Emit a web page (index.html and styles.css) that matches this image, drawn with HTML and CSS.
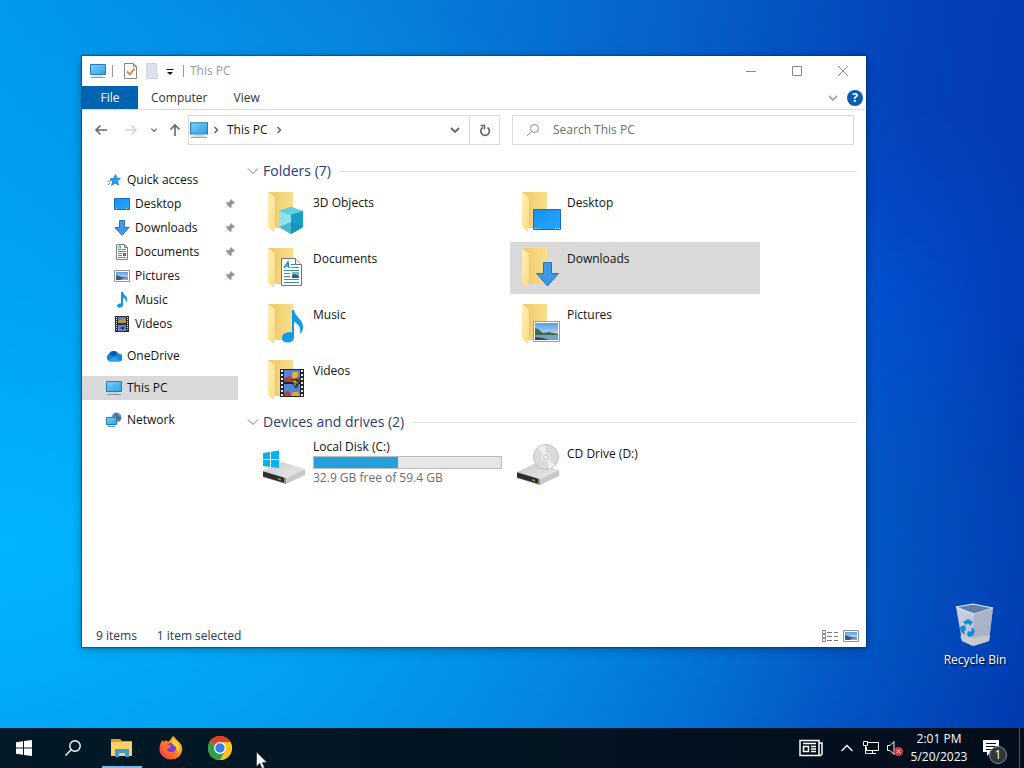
FILE: index.html
```html
<!DOCTYPE html>
<html lang="en">
<head>
    <meta charset="UTF-8">
    <meta name="viewport" content="width=device-width, initial-scale=1.0">
    <title>This PC</title>
    <link rel="stylesheet" href="styles.css">
</head>
<body>
    <!-- Shared icons -->
    <svg class="sprite" aria-hidden="true">
        <defs>
            <linearGradient id="screenFill" x1="0" y1="0" x2="1" y2="1">
                <stop offset="0" stop-color="#7fd0fa"/>
                <stop offset="1" stop-color="#2ba0ea"/>
            </linearGradient>
            <linearGradient id="desktopFill" x1="0" y1="0" x2="1" y2="1">
                <stop offset="0" stop-color="#1590f0"/>
                <stop offset="1" stop-color="#28a8ff"/>
            </linearGradient>
            <linearGradient id="folderBack" x1="0" y1="0" x2="1" y2="0">
                <stop offset="0" stop-color="#eec766"/>
                <stop offset="1" stop-color="#fbdf8c"/>
            </linearGradient>
            <linearGradient id="folderFlap" x1="0" y1="0" x2="1" y2="1">
                <stop offset="0" stop-color="#fff0b8"/>
                <stop offset="1" stop-color="#fbdb84"/>
            </linearGradient>
            <linearGradient id="skyFill" x1="0" y1="0" x2="0" y2="1">
                <stop offset="0" stop-color="#5b9ee0"/>
                <stop offset="1" stop-color="#e4f2fa"/>
            </linearGradient>
            <linearGradient id="driveTop" x1="0" y1="0" x2="1" y2="1">
                <stop offset="0" stop-color="#c9c9c9"/>
                <stop offset="1" stop-color="#ececec"/>
            </linearGradient>
            <linearGradient id="binFill" x1="0" y1="0" x2="1" y2="1">
                <stop offset="0" stop-color="#c6d2e4"/>
                <stop offset="1" stop-color="#b4bccb"/>
            </linearGradient>
            <linearGradient id="foxFill" x1="1" y1="0" x2="0" y2="1">
                <stop offset="0" stop-color="#ffe14a"/>
                <stop offset="0.45" stop-color="#ff8a1e"/>
                <stop offset="1" stop-color="#f2275a"/>
            </linearGradient>
        </defs>

        <symbol id="pc" viewBox="0 0 16 16">
            <path d="M.5 1.5h15v10H.5z" fill="url(#screenFill)" stroke="#2b7cb3"/>
            <path d="M4 13h8" stroke="#bcd4e2"/>
            <path d="M1 14.5h14" stroke="#8198a6"/>
        </symbol>
        <symbol id="star" viewBox="0 0 16 16">
            <path d="M9.500 2.500l1.200 3.600 3.800.2-3 2.600 1 4.100-3.500-2-3.400 2.500.9-4.300-2.500-2.300 3.800-.7z" fill="#2b9bea" stroke="#1d7cc6" stroke-width=".8"/>
            <path d="M2 10l3-2M2 13l2-2" stroke="#3f93cf"/>
        </symbol>
        <symbol id="desktop" viewBox="0 0 16 16">
            <path d="M.5 2.500h15v11H.5z" fill="url(#desktopFill)" stroke="#1173bb"/>
            <path d="M2 12.500h2m8 0h2" stroke="#bfe3fb" stroke-dasharray="1 1"/>
        </symbol>
        <symbol id="download" viewBox="0 0 16 16">
            <path d="M5.500.5h5v7h4.500L8 15.300 1 7.500h4.500z" fill="#3d9aec" stroke="#2a72b8"/>
        </symbol>
        <symbol id="document" viewBox="0 0 16 16">
            <path d="M2.500.5h8l3 3v12h-11z" fill="#fff" stroke="#77858b"/>
            <path d="M10.500.5v3h3" fill="none" stroke="#77858b"/>
            <path d="M4 5.500h3M4 7.500h8M4 9.500h4M4 11.500h4M4 13.500h8" stroke="#3f93a8"/>
            <path d="M4 4.500l2-3 1 3M8 5.500h4" fill="none" stroke="#2ba0a8"/>
            <path d="M9 9h3v3H9z" fill="#3c7b70"/>
        </symbol>
        <symbol id="picture" viewBox="0 0 16 16">
            <path d="M.5 2.500h15v11H.5z" fill="#fff" stroke="#8a949c"/>
            <path d="M2 4h12v8H2z" fill="url(#skyFill)"/>
            <path d="M2 7l3 1 3 1 6 .5V12H2z" fill="#3e5c78"/>
            <path d="M7 11l4-1 3 0v2H7z" fill="#7fa8c8"/>
        </symbol>
        <symbol id="note" viewBox="0 0 16 16">
            <path d="M7 0h2c.2 3 4.500 4 4.200 7.500-.1 1.300-.7 2.300-1.200 3 .2-2.500-.8-4-3-4.700V13c0 1.700-1.600 2.800-3.300 2.800C4 15.800 3 15 3 13.800c0-1.500 1.800-2.600 4-2.300z" fill="#1794e4"/>
        </symbol>
        <symbol id="film" viewBox="0 0 16 16">
            <path d="M1 0h14v16H1z" fill="#2c2c35"/>
            <path d="M4 1h8v6H4z" fill="#5c79cc"/>
            <path d="M4 9h8v6H4z" fill="#6a86d8"/>
            <path d="M4 5l3-1 1-2 2 1 2 2v2H4z" fill="#b99a3a"/>
            <path d="M6 12l3-2 2 2-2 2z" fill="#30405f"/>
            <path d="M2.500 1v14M13.500 1v14" stroke="#e8e8e8" stroke-dasharray="1 1"/>
        </symbol>
        <symbol id="cloud" viewBox="0 0 16 16">
            <path d="M4 13.500a4 4 0 0 1-1-7.500 5 5 0 0 1 9-.5 4 4 0 0 1 1 8z" fill="#1583d6"/>
            <path d="M3 6.200a5 5 0 0 1 9-.8l-4 3z" fill="#0a5caa"/>
            <path d="M1.500 12.500L9 8.500l5.500 4.500-1.500.5H4z" fill="#2ea2ee"/>
        </symbol>
        <symbol id="network" viewBox="0 0 16 16">
            <circle cx="10.500" cy="5.500" r="5" fill="#7296ad"/>
            <path d="M8 2l3-1 1 3 3 1-1 4-3-2z" fill="#3d6f96"/>
            <path d="M.5 5.500h10v7H.5z" fill="url(#screenFill)" stroke="#2079b8"/>
            <path d="M2 14.500h7" stroke="#4b9bcd"/>
        </symbol>
        <symbol id="pin" viewBox="0 0 12 12">
            <path d="M7 1l4 4-1 .8-.8-.2L7.500 7.400v2l-1 .8-2.300-2.300L1 11l3-3.400L1.800 5.300l.8-1h2L6.400 2.700 6.200 1.800z" fill="#8f979d"/>
        </symbol>
        <symbol id="folder" viewBox="0 0 48 48">
            <path d="M8 4h25v36H14z" fill="url(#folderBack)"/>
            <path d="M8 4l8 6v28l-2 1v5l-6-5z" fill="url(#folderFlap)"/>
            <path d="M15.500 10v28" stroke="#e8c66c"/>
        </symbol>
        <symbol id="drive" viewBox="0 0 48 48">
            <path d="M3 33l19-9 23 7-19 9z" fill="url(#driveTop)"/>
            <path d="M3 33l23 7v6L3 39z" fill="#8c8c8c"/>
            <path d="M3 33.500l21 6.300v5L3 38.500z" fill="#2e2e2e"/>
            <path d="M26 40l19-9v6l-19 9z" fill="#c9c9c9"/>
            <path d="M18 40l3 1v1.500l-3-1z" fill="#52c43c"/>
        </symbol>
        <symbol id="chevronDown" viewBox="0 0 12 12">
            <path d="M2 4l4 4 4-4" fill="none" stroke="currentColor" stroke-width="1.800"/>
        </symbol>
        <symbol id="chevronThin" viewBox="0 0 12 12">
            <path d="M1 3.500l5 5 5-5" fill="none" stroke="currentColor"/>
        </symbol>
        <symbol id="chevronRight" viewBox="0 0 12 12">
            <path d="M4.500 3l3 3-3 3" fill="none" stroke="currentColor" stroke-width="1.500"/>
        </symbol>
        <symbol id="arrow" viewBox="0 0 14 14">
            <path d="M13 7H2M6.500 2.500L2 7l4.500 4.500" fill="none" stroke="currentColor" stroke-width="1.600"/>
        </symbol>
    </svg>

    <main class="desktop">
        <section class="window" aria-label="This PC">
            <header class="title-bar">
                <svg class="icon"><use href="#pc"/></svg>
                <span class="divider"></span>
                <button class="quick-btn" aria-label="Properties">
                    <svg class="icon" viewBox="0 0 16 16">
                        <path d="M2.500.5h9l3 3v12h-12z" fill="#fff" stroke="#8b8580"/>
                        <path d="M11.500.5v3h3" fill="none" stroke="#8b8580"/>
                        <path d="M5 8.500l3 3 4.500-6" fill="none" stroke="#d97b3d" stroke-width="1.800"/>
                    </svg>
                </button>
                <button class="quick-btn" aria-label="New folder">
                    <svg class="icon" viewBox="0 0 16 16"><path d="M2.500.5h10v9l1 1v5h-11z" fill="#dbe2ef" stroke="#ccd4e2"/></svg>
                </button>
                <button class="quick-menu" aria-label="Customize toolbar">
                    <svg class="small-icon" viewBox="0 0 12 12"><path d="M2.500 4.500h7" stroke="#111"/><path d="M3 7h6L6 10z" fill="#111"/></svg>
                </button>
                <span class="divider"></span>
                <h1 class="title">This PC</h1>
                <div class="window-controls">
                    <button aria-label="Minimize"><svg class="small-icon" viewBox="0 0 12 12"><path d="M1 6.500h10" stroke="#888"/></svg></button>
                    <button aria-label="Maximize"><svg class="small-icon" viewBox="0 0 12 12"><path d="M1.500 1.500h9v9h-9z" fill="none" stroke="#888"/></svg></button>
                    <button aria-label="Close"><svg class="small-icon" viewBox="0 0 12 12"><path d="M1 1l10 10M11 1L1 11" stroke="#888"/></svg></button>
                </div>
            </header>

            <div class="ribbon">
                <button class="tab active">File</button>
                <button class="tab">Computer</button>
                <button class="tab">View</button>
                <button class="expand" aria-label="Expand the ribbon"><svg class="small-icon"><use href="#chevronDown"/></svg></button>
                <button class="help" aria-label="Help">?</button>
            </div>

            <div class="toolbar">
                <div class="nav-buttons">
                    <button aria-label="Back"><svg class="arrow-icon"><use href="#arrow"/></svg></button>
                    <button class="disabled" aria-label="Forward" disabled><svg class="arrow-icon forward"><use href="#arrow"/></svg></button>
                    <button class="recent" aria-label="Recent locations"><svg class="tiny-icon"><use href="#chevronDown"/></svg></button>
                    <button class="up" aria-label="Up"><svg class="arrow-icon upward"><use href="#arrow"/></svg></button>
                </div>
                <div class="address">
                    <svg class="address-icon"><use href="#pc"/></svg>
                    <svg class="small-icon"><use href="#chevronRight"/></svg>
                    <a href="#this-pc">This PC</a>
                    <svg class="small-icon"><use href="#chevronRight"/></svg>
                    <button class="history" aria-label="Previous locations"><svg class="small-icon"><use href="#chevronDown"/></svg></button>
                    <button class="refresh" aria-label="Refresh">
                        <svg class="arrow-icon" viewBox="0 0 14 14">
                            <path d="M9.500 4.500A4.300 4.300 0 1 1 5 4.300" fill="none" stroke="#666" stroke-width="1.700"/>
                            <path d="M2.500 2.500h4v4" fill="none" stroke="#666" stroke-width="1.500"/>
                        </svg>
                    </button>
                </div>
                <label class="search">
                    <svg class="arrow-icon" viewBox="0 0 14 14">
                        <circle cx="8.500" cy="5.500" r="4" fill="none" stroke="#888"/>
                        <path d="M5.500 8.500L1 13" stroke="#888"/>
                    </svg>
                    <input type="text" placeholder="Search This PC" aria-label="Search This PC">
                </label>
            </div>

            <div class="body">
                <nav class="sidebar">
                    <div class="group">
                        <a href="#quick"><svg class="icon"><use href="#star"/></svg>Quick access</a>
                        <a class="sub" href="#desktop-folder"><svg class="icon"><use href="#desktop"/></svg>Desktop<svg class="pin"><use href="#pin"/></svg></a>
                        <a class="sub" href="#downloads"><svg class="icon"><use href="#download"/></svg>Downloads<svg class="pin"><use href="#pin"/></svg></a>
                        <a class="sub" href="#documents"><svg class="icon"><use href="#document"/></svg>Documents<svg class="pin"><use href="#pin"/></svg></a>
                        <a class="sub" href="#pictures"><svg class="icon"><use href="#picture"/></svg>Pictures<svg class="pin"><use href="#pin"/></svg></a>
                        <a class="sub" href="#music"><svg class="icon"><use href="#note"/></svg>Music</a>
                        <a class="sub" href="#videos"><svg class="icon"><use href="#film"/></svg>Videos</a>
                    </div>
                    <a href="#onedrive"><svg class="icon"><use href="#cloud"/></svg>OneDrive</a>
                    <a class="current" href="#this-pc"><svg class="icon"><use href="#pc"/></svg>This PC</a>
                    <a href="#network-places"><svg class="icon"><use href="#network"/></svg>Network</a>
                </nav>

                <div class="content" id="this-pc">
                    <h2 class="section-title"><svg class="small-icon"><use href="#chevronThin"/></svg>Folders (7)</h2>
                    <div class="tiles">
                        <a class="tile" href="#objects">
                            <svg class="tile-icon" viewBox="0 0 48 48">
                                <use href="#folder"/>
                                <path d="M31 19l12 4v16l-12 7-12-7V23z" fill="#35bcd6"/>
                                <path d="M31 19l12 4-12 4-12-4z" fill="#5fd0e2"/>
                                <path d="M19 23l12 4v19l-12-7z" fill="#8fe3ea"/>
                                <path d="M31 27l12-4v16l-12 7z" fill="#1a9fc4"/>
                                <path d="M19 39l12-5 12 5-12 7z" fill="#1387b0" opacity=".5"/>
                            </svg>
                            <span class="label">3D Objects</span>
                        </a>
                        <a class="tile" href="#desktop-folder">
                            <svg class="tile-icon" viewBox="0 0 48 48">
                                <use href="#folder"/>
                                <path d="M19.500 21.500h27v20h-27z" fill="url(#desktopFill)" stroke="#1173bb"/>
                                <path d="M21 40.500h6m14 0h5" stroke="#d8efff" stroke-dasharray="1 1"/>
                            </svg>
                            <span class="label">Desktop</span>
                        </a>
                        <a class="tile" href="#documents">
                            <svg class="tile-icon" viewBox="0 0 48 48">
                                <use href="#folder"/>
                                <path d="M21.500 14.500h14l6 6v21h-20z" fill="#fff" stroke="#6b767c"/>
                                <path d="M35.500 14.500v6h6" fill="#eee" stroke="#6b767c"/>
                                <path d="M24 24l4-6 1 6M25 22h4" fill="none" stroke="#2497b8" stroke-width="1.500"/>
                                <path d="M31 20.500h4M31 23.500h8M24 26.500h15M24 29.500h6M24 32.500h6M24 35.500h15M24 38.500h15" stroke="#3a8fae"/>
                                <path d="M32 28h7v6h-7z" fill="#7fb5d6"/>
                                <path d="M32 31l3-1 4 2v2h-7z" fill="#2f6a50"/>
                            </svg>
                            <span class="label">Documents</span>
                        </a>
                        <a class="tile selected" href="#downloads">
                            <svg class="tile-icon" viewBox="0 0 48 48">
                                <use href="#folder"/>
                                <path d="M29.500 18.500h8v11h7L33.500 42l-11-12.500h7z" fill="#3d98e8" stroke="#2a72b8"/>
                            </svg>
                            <span class="label">Downloads</span>
                        </a>
                        <a class="tile" href="#music">
                            <svg class="tile-icon" viewBox="0 0 48 48">
                                <use href="#folder"/>
                                <path d="M32 10h2c1 7 9 9 9 17 0 3-1 5-3 7 1-6-1-10-6-12v15c0 4-3 5.500-6.500 5.500S22 41 22 38c0-4 4-6.500 10-5.500z" fill="#109bea"/>
                            </svg>
                            <span class="label">Music</span>
                        </a>
                        <a class="tile" href="#pictures">
                            <svg class="tile-icon" viewBox="0 0 48 48">
                                <use href="#folder"/>
                                <path d="M19.500 21.500h26v20h-26z" fill="#fff" stroke="#9a9a9a"/>
                                <path d="M21 23h23v17H21z" fill="url(#skyFill)"/>
                                <path d="M21 28l3 1 5 4 6-1 9 2v1H21z" fill="#3f6a51"/>
                                <path d="M21 35h23v5H21z" fill="#6fa2c6"/>
                                <path d="M21 37l8 1 6 2H21z" fill="#2c4b59"/>
                            </svg>
                            <span class="label">Pictures</span>
                        </a>
                        <a class="tile" href="#videos">
                            <svg class="tile-icon" viewBox="0 0 48 48">
                                <use href="#folder"/>
                                <path d="M20 13h24v28H20z" fill="#24242b"/>
                                <path d="M24 14h16v12H24zM24 28h16v12H24z" fill="#5583dc"/>
                                <path d="M24 23l5-3 5 3 6-2v5H24z" fill="#b43b33"/>
                                <path d="M33 16h5v4l-2 3h-3l-1-4z" fill="#efb321"/>
                                <path d="M31 24l5-2 4 3-3 7h-2z" fill="#2b3b2e"/>
                                <path d="M35 24v6M32 25l6 2" stroke="#e5b52b"/>
                                <path d="M31 40l2-4h5l2 4z" fill="#e5a92b"/>
                                <path d="M24 37l4-2 3 3v2h-7z" fill="#a7452d"/>
                                <path d="M22 14v26M42 14v26" stroke="#ededed" stroke-width="2" stroke-dasharray="2 2"/>
                            </svg>
                            <span class="label">Videos</span>
                        </a>
                    </div>

                    <h2 class="section-title"><svg class="small-icon"><use href="#chevronThin"/></svg>Devices and drives (2)</h2>
                    <div class="tiles">
                        <a class="tile drive" href="#disk-c">
                            <svg class="tile-icon" viewBox="0 0 48 48">
                                <use href="#drive"/>
                                <path d="M3 15l7-1v7H3zM11 13.800l8-1.300V21h-8zM3 22h7v7l-7-1zM11 22h8v8l-8-1z" fill="#00b2ee"/>
                            </svg>
                            <span class="drive-info">
                                <span>Local Disk (C:)</span>
                                <span class="usage"><span class="used" style="width: 45%"></span></span>
                                <span class="free">32.9 GB free of 59.4 GB</span>
                            </span>
                        </a>
                        <a class="tile" href="#disk-d">
                            <svg class="tile-icon" viewBox="0 0 48 48">
                                <use href="#drive"/>
                                <circle cx="32" cy="18" r="12.500" fill="#d8dbdc" stroke="#bfc3c5"/>
                                <path d="M32 18l-8-9a12 12 0 0 1 7-3zM32 18l9 8a12 12 0 0 1-6 4z" fill="#eef0f0"/>
                                <circle cx="32" cy="18" r="4" fill="#d0d3d5" stroke="#f4f4f4"/>
                                <circle cx="32" cy="18" r="1.500" fill="#fff"/>
                            </svg>
                            <span class="label">CD Drive (D:)</span>
                        </a>
                    </div>
                </div>
            </div>

            <footer class="status-bar">
                <span>9 items</span>
                <span>1 item selected</span>
                <div class="views">
                    <button aria-label="Details view">
                        <svg class="view-icon" viewBox="0 0 18 14">
                            <path d="M1.500 1.500h3v3h-3zM1.500 5.500h3v3h-3zM1.500 9.500h3v3h-3z" fill="#fff" stroke="#888"/>
                            <path d="M6 3.500h5M6 7.500h5M6 11.500h5M13 3.500h4M13 7.500h4M13 11.500h4" stroke="#777"/>
                        </svg>
                    </button>
                    <button aria-label="Large icons view"><svg class="icon"><use href="#picture"/></svg></button>
                </div>
            </footer>
        </section>

        <a class="shortcut" href="#recycle-bin">
            <svg class="bin" viewBox="0 0 40 44">
                <path d="M1 4L18 1l20 4-4 33-16 5L7 38z" fill="url(#binFill)"/>
                <path d="M1 4L18 1l20 4-19 6z" fill="#5f7fa8" stroke="#e8eef6"/>
                <path d="M19 11l19-6-4 33-16 5z" fill="#a3acbd" opacity=".7"/>
                <path d="M5 33l13 2 17-3-1 6-16 5-11-5z" fill="#d5d0ce" opacity=".7"/>
                <path d="M8 19l5-3 5 3-3 4-2-3-2 2zM5 24l5-2 1 5-2 1 1 4-4-3zM12 32l1-4 3 1 1-5 3 4-2 5-4 1z" fill="#1688d8"/>
            </svg>
            <span>Recycle Bin</span>
        </a>
    </main>

    <footer class="taskbar">
        <button class="task" aria-label="Start">
            <svg class="icon" viewBox="0 0 16 16"><path d="M0 2.200L7 1.200V7.500H0zM8 1l8-1v7.500H8zM0 8.500h7v6.300l-7-1zM8 8.500h8V16l-8-1z" fill="#fff"/></svg>
        </button>
        <button class="task" aria-label="Search">
            <svg class="icon" viewBox="0 0 16 16"><circle cx="10" cy="6" r="5.200" fill="none" stroke="#fff" stroke-width="1.400"/><path d="M6.200 9.800L.5 15.500" stroke="#fff" stroke-width="1.400"/></svg>
        </button>
        <button class="task running" aria-label="File Explorer">
            <svg class="app-icon" viewBox="0 0 24 24">
                <path d="M1 3h9l2 2h10v3H1z" fill="#dc9e2c"/>
                <path d="M1 6h21v14H1z" fill="#fbd267"/>
                <path d="M5 13h14v8h-4v-4H9v4H5z" fill="#3f9ad0"/>
            </svg>
        </button>
        <button class="task" aria-label="Firefox">
            <svg class="app-icon" viewBox="0 0 24 24">
                <path d="M14 0c2 2 3 3 5 5 3 2.500 5 6 4 10-1 5-5.500 8.500-11 8.500S1 19.500.5 14C.3 10 1.500 6.500 3.500 4L5 6l2-2 2 2c1.500-1 3-3 5-6z" fill="url(#foxFill)"/>
                <circle cx="12" cy="12" r="5" fill="#7a3fd0"/>
                <path d="M4 8c4-1 6 1 8 2-1 3-4 2-4 4 1 3 6 2 8 1-2 4-7 5-10 2-2-2-3-6-2-9z" fill="#ff6a3a"/>
                <path d="M14 1c1 4 5 5 6 9 1 3 0 6-2 8 1-5-1-8-5-10z" fill="#ffd33c"/>
            </svg>
        </button>
        <button class="task" aria-label="Chrome">
            <svg class="app-icon" viewBox="0 0 24 24">
                <circle cx="12" cy="12" r="12" fill="#fbc518"/>
                <path d="M12 12L1.600 6A12 12 0 0 1 22.400 6z" fill="#e33b2e"/>
                <path d="M12 12L1.600 6A12 12 0 0 0 12 24l5.200-9z" fill="#2da04c"/>
                <path d="M12 6h10.400A12 12 0 0 1 12 24l5.200-9z" fill="#fbc518"/>
                <circle cx="12" cy="12" r="6" fill="#fff"/>
                <circle cx="12" cy="12" r="4.700" fill="#3b7ded"/>
            </svg>
        </button>

        <div class="tray">
            <button class="news" aria-label="News">
                <svg class="app-icon" viewBox="0 0 24 24">
                    <path d="M1 4.500h19v15H1zM20 7h3v11l-1.500 1.500H20" fill="none" stroke="#fff" stroke-width="1.500"/>
                    <path d="M4.500 10.500h5v5h-5z" fill="none" stroke="#fff" stroke-width="1.500"/>
                    <path d="M4 7.500h13M12 10.500h5M12 13h5M12 15.500h5" stroke="#fff" stroke-width="1.400"/>
                </svg>
            </button>
            <button aria-label="Show hidden icons">
                <svg class="arrow-icon" viewBox="0 0 14 14"><path d="M1.500 10L7 4.500l5.500 5.500" fill="none" stroke="#fff" stroke-width="1.300"/></svg>
            </button>
            <button aria-label="Network">
                <svg class="icon" viewBox="0 0 16 16">
                    <path d="M5 2.500h10.500v8H3.500V7M9.500 10.500v3M6 13.500h7" fill="none" stroke="#fff"/>
                    <path d="M.5 1.500h4v4h-4zM2.500 5.500v8h3" fill="none" stroke="#fff"/>
                </svg>
            </button>
            <button aria-label="Volume">
                <svg class="icon" viewBox="0 0 16 16">
                    <path d="M.5 5.500h2.500l4-4v13l-4-4H.5z" fill="none" stroke="#fff"/>
                    <circle cx="11.500" cy="11.500" r="4.500" fill="#cf3a40"/>
                    <path d="M9.700 9.700l3.600 3.600M13.300 9.700l-3.600 3.600" stroke="#fff"/>
                </svg>
            </button>
            <div class="clock"><time>2:01 PM</time><time datetime="2023-05-20">5/20/2023</time></div>
            <button class="notifications" aria-label="Notifications">
                <svg class="icon" viewBox="0 0 16 16">
                    <path d="M0 0h16v12H8l-4 4v-4H0z" fill="#fff"/>
                    <path d="M3 3.500h10M3 6.500h10M3 9.500h7" stroke="#04111d"/>
                </svg>
                <span class="badge">1</span>
            </button>
            <span class="show-desktop"></span>
        </div>
    </footer>

    <svg class="cursor" viewBox="0 0 12 18">
        <path d="M.5 0v14.500l3.300-3.200L6 16.500l2.500-1-2.200-5h4.700z" fill="#fff" stroke="#222" stroke-width=".6"/>
    </svg>
</body>
</html>
```
FILE: styles.css
```css
* {
    box-sizing: border-box;
}

body {
    margin: 0;
    height: 100vh;
    display: flex;
    flex-direction: column;
    overflow: hidden;
    font-family: "Open Sans", "Noto Sans", sans-serif;
    font-size: 12px;
    line-height: 18px;
    color: #111;
}

button {
    display: flex;
    align-items: center;
    justify-content: center;
    padding: 0;
    border: none;
    background: none;
    color: inherit;
    font: inherit;
}

a {
    color: inherit;
    text-decoration: none;
}

svg {
    flex: none;
}

.sprite {
    position: absolute;
    width: 0;
    height: 0;
}

.icon {
    width: 16px;
    height: 16px;
}

.small-icon {
    width: 12px;
    height: 12px;
}

.tiny-icon {
    width: 8px;
    height: 8px;
}

.arrow-icon {
    width: 14px;
    height: 14px;
}

.app-icon {
    width: 24px;
    height: 24px;
}

/* Desktop */

.desktop {
    position: relative;
    flex: 1;
    background:
        radial-gradient(circle at 86% 40%, rgba(0, 85, 225, 0.45), transparent 20%),
        radial-gradient(ellipse at 0% 75%, #00b4ff 0%, rgba(0, 176, 252, 0.6) 30%, transparent 75%),
        linear-gradient(97deg, #0098ee 0%, #0783dc 32%, #0562cc 60%, #0440b8 84%, #0038b0 100%);
}

.shortcut {
    position: absolute;
    right: 9px;
    bottom: 59px;
    width: 80px;
    display: flex;
    flex-direction: column;
    align-items: center;
    gap: 4px;
    color: #fff;
    text-shadow: 1px 1px 2px #000;
}

.bin {
    width: 40px;
    height: 44px;
}

/* Explorer window */

.window {
    position: absolute;
    top: 56px;
    right: 158px;
    bottom: 81px;
    left: 82px;
    display: flex;
    flex-direction: column;
    background: #fff;
    box-shadow: 0 0 1px 1px rgba(0, 50, 110, 0.5), 0 2px 10px rgba(0, 0, 0, 0.3);
}

.title-bar {
    display: flex;
    align-items: center;
    height: 30px;
    padding-left: 8px;
    color: #999;
}

.divider {
    width: 1px;
    height: 12px;
    margin: 0 6px;
    background: #999;
}

.quick-btn {
    width: 22px;
}

.quick-menu {
    width: 14px;
}

.title {
    margin: 0;
    font-size: 12px;
    font-weight: 400;
}

.window-controls {
    display: flex;
    height: 100%;
    margin-left: auto;
}

.window-controls button {
    width: 46px;
}

.ribbon {
    display: flex;
    align-items: stretch;
    height: 24px;
    border-bottom: 1px solid #dcdcdc;
    color: #333;
}

.tab {
    padding: 0 13px;
}

.tab.active {
    width: 56px;
    background: #0063b1;
    color: #fff;
}

.expand {
    margin-left: auto;
    color: #aaa;
}

.help {
    align-self: center;
    width: 16px;
    height: 16px;
    margin: 0 3px 0 8px;
    border-radius: 50%;
    background: #0a5cae;
    color: #fff;
    font-weight: 700;
}

.toolbar {
    display: grid;
    grid-template-columns: 94px 312fr 342fr;
    column-gap: 12px;
    padding: 5px 12px 5px 0;
}

.nav-buttons {
    display: flex;
    width: 106px;
    padding-left: 4px;
    color: #666;
}

.nav-buttons button {
    width: 30px;
}

.nav-buttons .disabled {
    color: #d4d4d4;
}

.nav-buttons .recent {
    width: 16px;
}

.nav-buttons .up {
    width: 26px;
}

.forward {
    transform: rotate(180deg);
}

.upward {
    transform: rotate(90deg);
}

.address {
    display: flex;
    align-items: center;
    height: 30px;
    border: 1px solid #d9d9d9;
    color: #666;
}

.address a {
    margin: 0 5px;
    color: #111;
}

.address-icon {
    width: 18px;
    height: 18px;
    margin: 0 2px 0 1px;
}

.history {
    width: 28px;
    margin-left: auto;
}

.refresh {
    align-self: stretch;
    width: 30px;
    border-left: 1px solid #d9d9d9;
}

.search {
    display: flex;
    align-items: center;
    gap: 13px;
    height: 30px;
    padding: 0 13px;
    border: 1px solid #d9d9d9;
}

.search input {
    flex: 1;
    min-width: 0;
    padding: 0;
    border: none;
    outline: none;
    background: none;
    font: inherit;
}

.search input::placeholder {
    color: #6d6d6d;
    opacity: 1;
}

.body {
    display: flex;
    flex: 1;
    min-height: 0;
}

.sidebar {
    display: flex;
    flex-direction: column;
    gap: 8px;
    width: 156px;
    padding-top: 18px;
}

.sidebar a {
    display: flex;
    align-items: center;
    gap: 5px;
    height: 24px;
    padding: 0 2px 0 24px;
}

.sidebar .sub {
    padding-left: 32px;
}

.sidebar .current {
    background: #d9d9d9;
}

.pin {
    width: 12px;
    height: 12px;
    margin-left: auto;
}

.content {
    flex: 1;
    padding: 6px 9px 0;
}

.section-title {
    display: flex;
    align-items: center;
    gap: 4px;
    height: 30px;
    margin: 0;
    color: #2c3a70;
    font-size: 14px;
    font-weight: 400;
}

.section-title .small-icon {
    color: #777;
}

.section-title::after {
    content: "";
    flex: 1;
    height: 1px;
    margin-left: 4px;
    background: #e2e2e2;
}

.tiles {
    display: grid;
    grid-template-columns: repeat(auto-fill, 250px);
    gap: 4px;
    margin-bottom: 1px;
    padding-left: 9px;
}

.tile {
    display: flex;
    align-items: flex-start;
    gap: 5px;
    height: 52px;
    padding: 2px 4px;
}

.tile.selected {
    background: #d9d9d9;
}

.tile-icon {
    width: 48px;
    height: 48px;
}

.label {
    padding-top: 6px;
}

.drive {
    padding-top: 1px;
}

.drive-info {
    display: flex;
    flex: 1;
    flex-direction: column;
}

.usage {
    height: 13px;
    border: 1px solid #bcbcbc;
    background: #e6e6e6;
}

.used {
    display: block;
    height: 100%;
    background: #26a0da;
}

.free {
    color: #6d6d6d;
}

.status-bar {
    display: flex;
    align-items: center;
    gap: 20px;
    height: 23px;
    padding: 0 7px 0 14px;
    color: #1e395b;
}

.views {
    display: flex;
    gap: 4px;
    margin-left: auto;
}

.view-icon {
    width: 18px;
    height: 14px;
}

/* Taskbar */

.taskbar {
    display: flex;
    gap: 1px;
    height: 40px;
    background: linear-gradient(90deg, #021a26, #030d1c);
    color: #fff;
}

.task {
    width: 48px;
}

.task.running {
    background: linear-gradient(#76b9ed, #76b9ed) center bottom / 40px 2px no-repeat;
}

.tray {
    display: flex;
    align-items: stretch;
    margin-left: auto;
}

.tray button {
    width: 24px;
}

.tray .news {
    width: 48px;
}

.clock {
    display: flex;
    flex-direction: column;
    justify-content: center;
    width: 64px;
    text-align: center;
}

.tray .notifications {
    position: relative;
    width: 40px;
}

.badge {
    position: absolute;
    right: 4px;
    bottom: 4px;
    width: 18px;
    height: 18px;
    border: 1px solid #8a8f94;
    border-radius: 50%;
    background: #2f363c;
    line-height: 16px;
}

.show-desktop {
    width: 5px;
    margin-left: 8px;
    border-left: 1px solid #4b555e;
}

.cursor {
    position: absolute;
    left: 256px;
    top: 752px;
    width: 12px;
    height: 18px;
}
```
